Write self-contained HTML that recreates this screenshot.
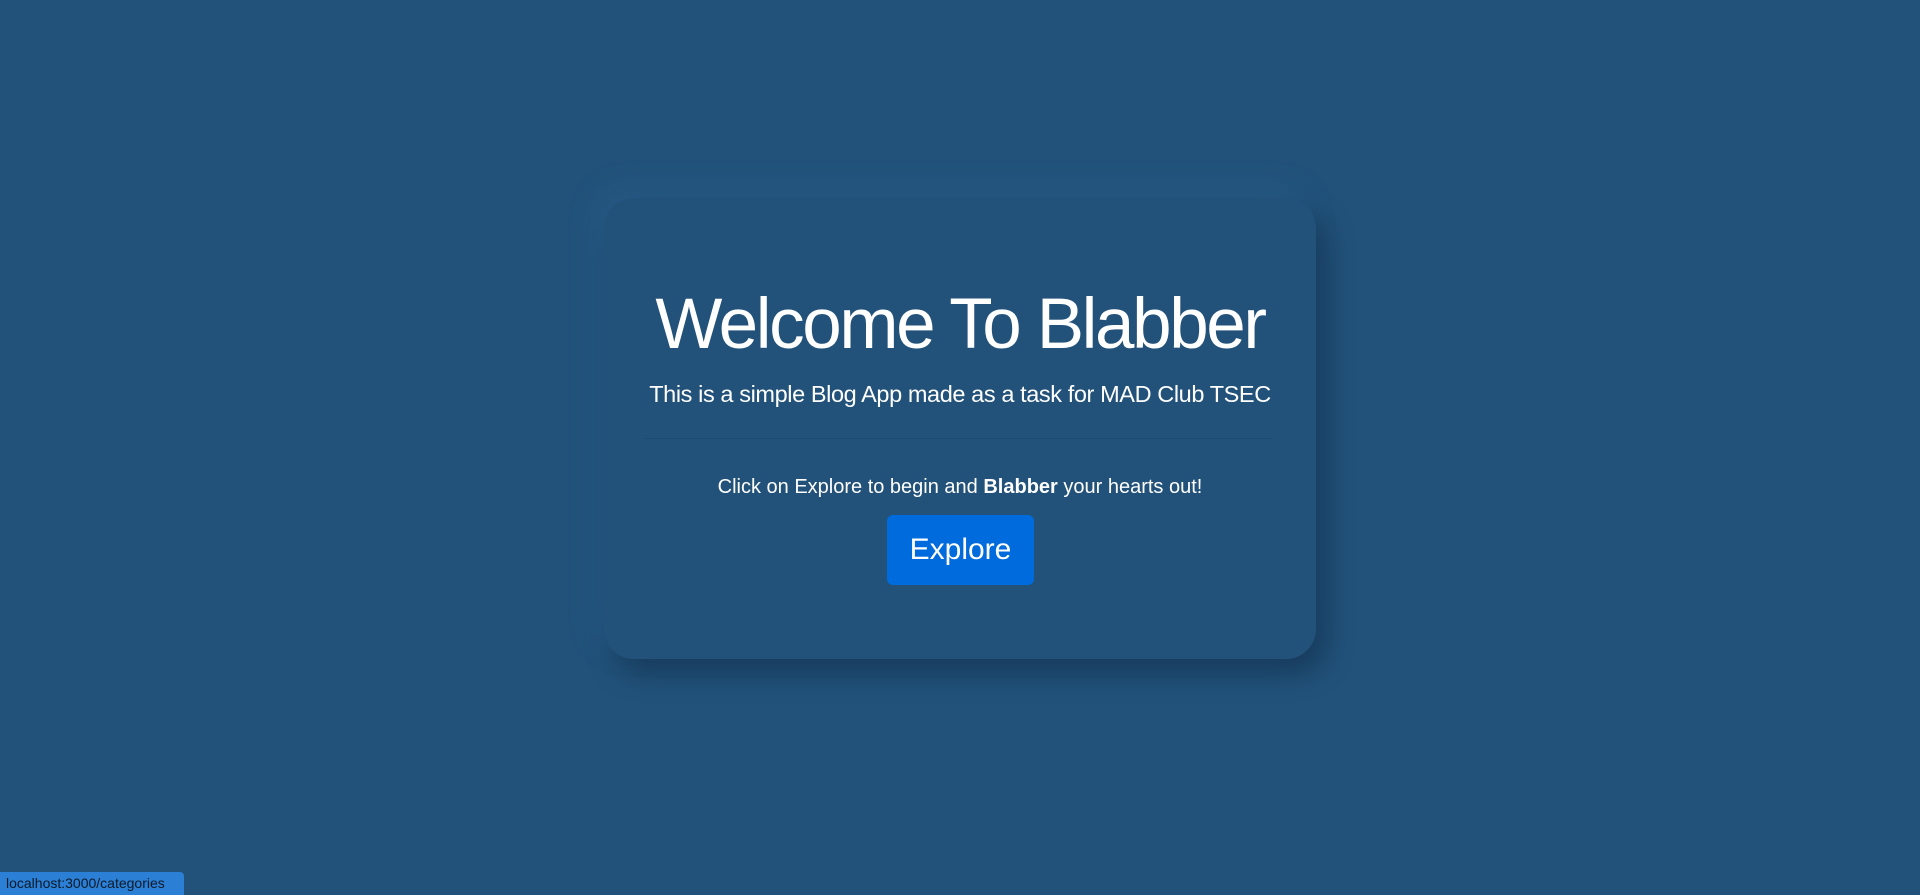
<!DOCTYPE html>
<html><head><meta charset="utf-8"><style>
html,body{margin:0;padding:0;width:1920px;height:895px;overflow:hidden;background:#22527a;font-family:"Liberation Sans",sans-serif;color:#fff}
.card{position:absolute;left:604px;top:198px;width:712px;height:461px;border-radius:30px;background:#22527a;box-shadow:10px 14px 28px rgba(10,30,55,.45),-8px -10px 26px rgba(50,110,160,.35);text-align:center}
.t{position:absolute;left:0;width:712px;white-space:nowrap;text-align:center}
.hr{position:absolute;left:41px;width:628px;top:240px;height:1px;background:#1e4a6f}
.btn{position:absolute;left:283px;top:317px;width:147px;height:70px;background:#006bdd;border-radius:6px;font-size:30px;line-height:70px;color:#fff}
.status{position:absolute;left:0;top:872px;width:184px;height:23px;background:#2b7fd4;border-top-right-radius:4px;color:#0c1a2a;font-size:14px;line-height:23px;padding-left:6px;box-sizing:border-box}
</style></head><body>
<div class="card">
 <div class="t" style="top:82px;font-size:71px;letter-spacing:-2.4px;font-weight:300;line-height:90px">Welcome To <b>Blabber</b></div>
 <div class="t" style="top:180px;font-size:23.5px;letter-spacing:-0.4px;line-height:32px">This is a simple Blog App made as a task for MAD Club TSEC</div>
 <div class="hr"></div>
 <div class="t" style="top:276px;font-size:20px;line-height:26px">Click on Explore to begin and <b>Blabber</b> your hearts out!</div>
 <div class="btn">Explore</div>
</div>
<div class="status">localhost:3000/categories</div>
</body></html>
